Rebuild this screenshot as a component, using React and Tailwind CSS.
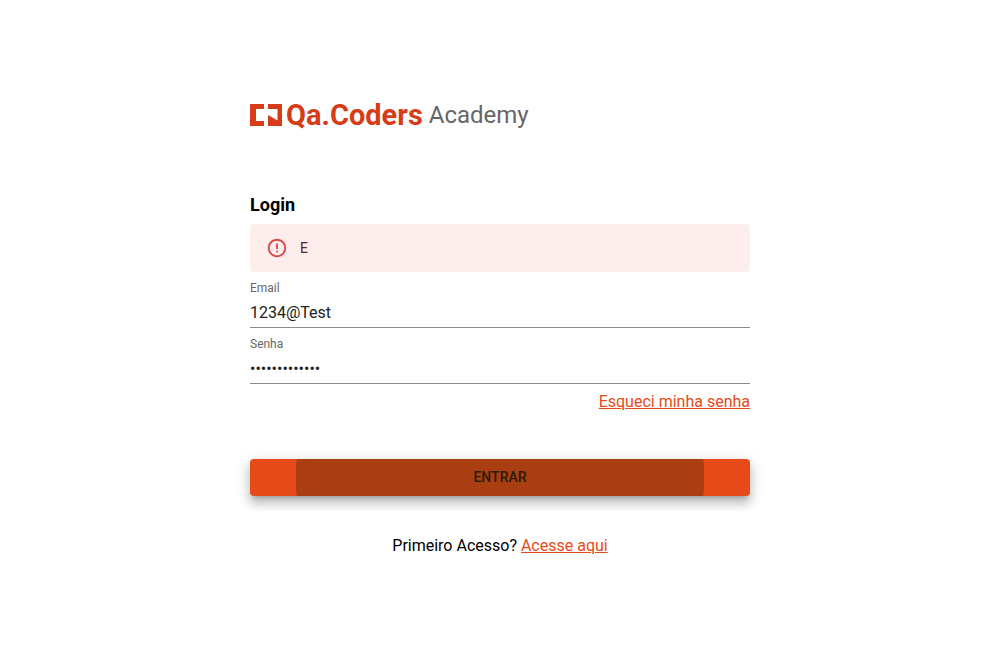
export default function App() {
  return (
    <main className="flex min-h-screen items-center justify-center bg-white px-6 pb-1 font-['Roboto',sans-serif] text-base text-black">
      <form className="flex w-full max-w-[500px] flex-col" onSubmit={(e) => e.preventDefault()}>
        <header className="mb-[62px] flex items-center gap-1 text-[#d63c17]">
          <svg className="h-[22px] w-8 shrink-0" viewBox="0 0 32 22" fill="currentColor" aria-hidden="true">
            <path d="M0 0H14V5H6V17H14V22H0Z" />
            <path d="M18 0H32V22H18V11L27.500 16.500V5H18Z" />
          </svg>
          <span className="text-[29px] leading-8 font-bold">Qa.Coders</span>
          <span className="ml-0.5 text-2xl leading-8 text-[#666668]">Academy</span>
        </header>
        <h1 className="mb-[7px] text-lg leading-6 font-bold">Login</h1>
        <div role="alert" className="flex h-12 items-center gap-3 rounded bg-[#fdeded] px-4 text-sm text-[#5f2120]">
          <svg className="size-[22px]" viewBox="0 0 24 24" fill="#d94848" aria-hidden="true">
            <path d="M11 15h2v2h-2zm0-8h2v6h-2zm.99-5C6.47 2 2 6.48 2 12s4.47 10 9.99 10C17.52 22 22 17.52 22 12S17.52 2 11.99 2zM12 20c-4.42 0-8-3.58-8-8s3.58-8 8-8 8 3.58 8 8-3.58 8-8 8z" />
          </svg>
          E
        </div>
        <label htmlFor="email" className="mt-2 text-xs text-[#666]">Email</label>
        <input id="email" type="email" defaultValue="1234@Test" className="h-8 border-b border-[#8c8c8c] pt-0.5 text-[#212121] outline-none" />
        <label htmlFor="senha" className="mt-2 text-xs text-[#666]">Senha</label>
        <input id="senha" type="password" defaultValue="1234567890123" className="h-8 border-b border-[#8c8c8c] pt-0.5 text-[#212121] outline-none" />
        <a href="#senha" className="mt-1.5 self-end text-[#e64a19] underline">Esqueci minha senha</a>
        <button
          type="submit"
          className="mt-[45px] flex h-[37px] justify-center rounded bg-[#e64a19] text-sm font-medium text-[#2b1c07] shadow-[0_5px_5px_-3px_rgba(0,0,0,0.2),0_8px_10px_1px_rgba(0,0,0,0.14),0_3px_14px_2px_rgba(0,0,0,0.12)]"
        >
          <span className="flex h-full w-[408px] max-w-[82%] items-center justify-center rounded-[1px/18px] bg-[#a83e12]">ENTRAR</span>
        </button>
        <p className="mt-[38px] text-center">Primeiro Acesso? <a href="#acesso" className="text-[#e64a19] underline">Acesse aqui</a></p>
      </form>
    </main>
  );
}
